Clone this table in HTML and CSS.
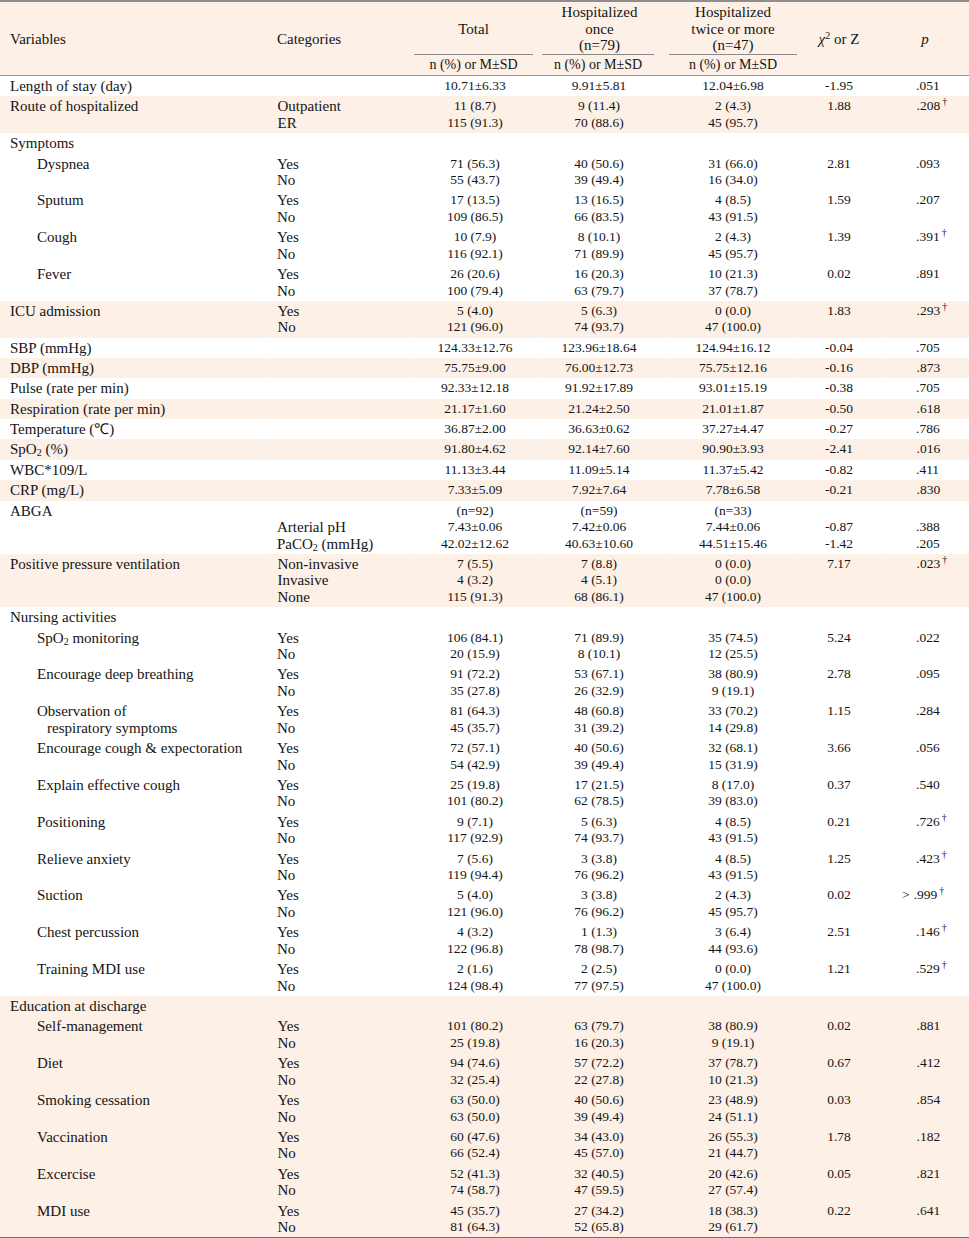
FILE: index.html
```html
<!DOCTYPE html>
<html>
<head>
<meta charset="utf-8">
<link rel="stylesheet" href="styles.css">
</head>
<body>
<table class="t">
<colgroup>
<col class="c-var"><col class="c-cat"><col class="c-tot"><col class="c-one"><col class="c-two"><col class="c-chi"><col class="c-p">
</colgroup>
<thead>
<tr class="h1">
<th rowspan="2" class="hv">Variables</th>
<th rowspan="2" class="hc">Categories</th>
<th class="hg hm">Total</th>
<th class="hg">Hospitalized<br>once<br>(n=79)</th>
<th class="hg">Hospitalized<br>twice or more<br>(n=47)</th>
<th rowspan="2" class="hx"><i>χ</i><sup>2</sup> or Z</th>
<th rowspan="2" class="hp"><i>p</i></th>
</tr>
<tr class="h2">
<th class="hs"><div class="sub s-tot">n (%) or M±SD</div></th>
<th class="hs"><div class="sub s-one">n (%) or M±SD</div></th>
<th class="hs"><div class="sub s-two">n (%) or M±SD</div></th>
</tr>
</thead>
<tbody>
<tr><td class="var">Length of stay (day)</td><td class="cat"></td><td class="n tot">10.71±6.33</td><td class="n one">9.91±5.81</td><td class="n two">12.04±6.98</td><td class="n chi">-1.95</td><td class="n p">.051</td></tr>
</tbody>
<tbody class="alt">
<tr><td class="var">Route of hospitalized</td><td class="cat">Outpatient<br>ER</td><td class="n tot">11 (8.7)<br>115 (91.3)</td><td class="n one">9 (11.4)<br>70 (88.6)</td><td class="n two">2 (4.3)<br>45 (95.7)</td><td class="n chi">1.88</td><td class="n p">.208<span class="dag">†</span></td></tr>
</tbody>
<tbody>
<tr><td class="var">Symptoms</td><td class="cat"></td><td class="n tot"></td><td class="n one"></td><td class="n two"></td><td class="n chi"></td><td class="n p"></td></tr>
<tr><td class="var in">Dyspnea</td><td class="cat">Yes<br>No</td><td class="n tot">71 (56.3)<br>55 (43.7)</td><td class="n one">40 (50.6)<br>39 (49.4)</td><td class="n two">31 (66.0)<br>16 (34.0)</td><td class="n chi">2.81</td><td class="n p">.093</td></tr>
<tr><td class="var in">Sputum</td><td class="cat">Yes<br>No</td><td class="n tot">17 (13.5)<br>109 (86.5)</td><td class="n one">13 (16.5)<br>66 (83.5)</td><td class="n two">4 (8.5)<br>43 (91.5)</td><td class="n chi">1.59</td><td class="n p">.207</td></tr>
<tr><td class="var in">Cough</td><td class="cat">Yes<br>No</td><td class="n tot">10 (7.9)<br>116 (92.1)</td><td class="n one">8 (10.1)<br>71 (89.9)</td><td class="n two">2 (4.3)<br>45 (95.7)</td><td class="n chi">1.39</td><td class="n p">.391<span class="dag">†</span></td></tr>
<tr><td class="var in">Fever</td><td class="cat">Yes<br>No</td><td class="n tot">26 (20.6)<br>100 (79.4)</td><td class="n one">16 (20.3)<br>63 (79.7)</td><td class="n two">10 (21.3)<br>37 (78.7)</td><td class="n chi">0.02</td><td class="n p">.891</td></tr>
</tbody>
<tbody class="alt">
<tr><td class="var">ICU admission</td><td class="cat">Yes<br>No</td><td class="n tot">5 (4.0)<br>121 (96.0)</td><td class="n one">5 (6.3)<br>74 (93.7)</td><td class="n two">0 (0.0)<br>47 (100.0)</td><td class="n chi">1.83</td><td class="n p">.293<span class="dag">†</span></td></tr>
</tbody>
<tbody>
<tr><td class="var">SBP (mmHg)</td><td class="cat"></td><td class="n tot">124.33±12.76</td><td class="n one">123.96±18.64</td><td class="n two">124.94±16.12</td><td class="n chi">-0.04</td><td class="n p">.705</td></tr>
</tbody>
<tbody class="alt">
<tr><td class="var">DBP (mmHg)</td><td class="cat"></td><td class="n tot">75.75±9.00</td><td class="n one">76.00±12.73</td><td class="n two">75.75±12.16</td><td class="n chi">-0.16</td><td class="n p">.873</td></tr>
</tbody>
<tbody>
<tr><td class="var">Pulse (rate per min)</td><td class="cat"></td><td class="n tot">92.33±12.18</td><td class="n one">91.92±17.89</td><td class="n two">93.01±15.19</td><td class="n chi">-0.38</td><td class="n p">.705</td></tr>
</tbody>
<tbody class="alt">
<tr><td class="var">Respiration (rate per min)</td><td class="cat"></td><td class="n tot">21.17±1.60</td><td class="n one">21.24±2.50</td><td class="n two">21.01±1.87</td><td class="n chi">-0.50</td><td class="n p">.618</td></tr>
</tbody>
<tbody>
<tr><td class="var">Temperature (℃)</td><td class="cat"></td><td class="n tot">36.87±2.00</td><td class="n one">36.63±0.62</td><td class="n two">37.27±4.47</td><td class="n chi">-0.27</td><td class="n p">.786</td></tr>
</tbody>
<tbody class="alt">
<tr><td class="var">SpO<sub>2</sub> (%)</td><td class="cat"></td><td class="n tot">91.80±4.62</td><td class="n one">92.14±7.60</td><td class="n two">90.90±3.93</td><td class="n chi">-2.41</td><td class="n p">.016</td></tr>
</tbody>
<tbody>
<tr><td class="var">WBC*109/L</td><td class="cat"></td><td class="n tot">11.13±3.44</td><td class="n one">11.09±5.14</td><td class="n two">11.37±5.42</td><td class="n chi">-0.82</td><td class="n p">.411</td></tr>
</tbody>
<tbody class="alt">
<tr><td class="var">CRP (mg/L)</td><td class="cat"></td><td class="n tot">7.33±5.09</td><td class="n one">7.92±7.64</td><td class="n two">7.78±6.58</td><td class="n chi">-0.21</td><td class="n p">.830</td></tr>
</tbody>
<tbody>
<tr><td class="var">ABGA</td><td class="cat"><br>Arterial pH<br>PaCO<sub>2</sub> (mmHg)</td><td class="n tot">(n=92)<br>7.43±0.06<br>42.02±12.62</td><td class="n one">(n=59)<br>7.42±0.06<br>40.63±10.60</td><td class="n two">(n=33)<br>7.44±0.06<br>44.51±15.46</td><td class="n chi"><br>-0.87<br>-1.42</td><td class="n p"><br>.388<br>.205</td></tr>
</tbody>
<tbody class="alt">
<tr><td class="var">Positive pressure ventilation</td><td class="cat">Non-invasive<br>Invasive<br>None</td><td class="n tot">7 (5.5)<br>4 (3.2)<br>115 (91.3)</td><td class="n one">7 (8.8)<br>4 (5.1)<br>68 (86.1)</td><td class="n two">0 (0.0)<br>0 (0.0)<br>47 (100.0)</td><td class="n chi">7.17</td><td class="n p">.023<span class="dag">†</span></td></tr>
</tbody>
<tbody>
<tr><td class="var">Nursing activities</td><td class="cat"></td><td class="n tot"></td><td class="n one"></td><td class="n two"></td><td class="n chi"></td><td class="n p"></td></tr>
<tr><td class="var in">SpO<sub>2</sub> monitoring</td><td class="cat">Yes<br>No</td><td class="n tot">106 (84.1)<br>20 (15.9)</td><td class="n one">71 (89.9)<br>8 (10.1)</td><td class="n two">35 (74.5)<br>12 (25.5)</td><td class="n chi">5.24</td><td class="n p">.022</td></tr>
<tr><td class="var in">Encourage deep breathing</td><td class="cat">Yes<br>No</td><td class="n tot">91 (72.2)<br>35 (27.8)</td><td class="n one">53 (67.1)<br>26 (32.9)</td><td class="n two">38 (80.9)<br>9 (19.1)</td><td class="n chi">2.78</td><td class="n p">.095</td></tr>
<tr><td class="var in">Observation of<br><span class="in2">respiratory symptoms</span></td><td class="cat">Yes<br>No</td><td class="n tot">81 (64.3)<br>45 (35.7)</td><td class="n one">48 (60.8)<br>31 (39.2)</td><td class="n two">33 (70.2)<br>14 (29.8)</td><td class="n chi">1.15</td><td class="n p">.284</td></tr>
<tr><td class="var in">Encourage cough &amp; expectoration</td><td class="cat">Yes<br>No</td><td class="n tot">72 (57.1)<br>54 (42.9)</td><td class="n one">40 (50.6)<br>39 (49.4)</td><td class="n two">32 (68.1)<br>15 (31.9)</td><td class="n chi">3.66</td><td class="n p">.056</td></tr>
<tr><td class="var in">Explain effective cough</td><td class="cat">Yes<br>No</td><td class="n tot">25 (19.8)<br>101 (80.2)</td><td class="n one">17 (21.5)<br>62 (78.5)</td><td class="n two">8 (17.0)<br>39 (83.0)</td><td class="n chi">0.37</td><td class="n p">.540</td></tr>
<tr><td class="var in">Positioning</td><td class="cat">Yes<br>No</td><td class="n tot">9 (7.1)<br>117 (92.9)</td><td class="n one">5 (6.3)<br>74 (93.7)</td><td class="n two">4 (8.5)<br>43 (91.5)</td><td class="n chi">0.21</td><td class="n p">.726<span class="dag">†</span></td></tr>
<tr><td class="var in">Relieve anxiety</td><td class="cat">Yes<br>No</td><td class="n tot">7 (5.6)<br>119 (94.4)</td><td class="n one">3 (3.8)<br>76 (96.2)</td><td class="n two">4 (8.5)<br>43 (91.5)</td><td class="n chi">1.25</td><td class="n p">.423<span class="dag">†</span></td></tr>
<tr><td class="var in">Suction</td><td class="cat">Yes<br>No</td><td class="n tot">5 (4.0)<br>121 (96.0)</td><td class="n one">3 (3.8)<br>76 (96.2)</td><td class="n two">2 (4.3)<br>45 (95.7)</td><td class="n chi">0.02</td><td class="n p"><span class="gt">&gt;</span>.999<span class="dag">†</span></td></tr>
<tr><td class="var in">Chest percussion</td><td class="cat">Yes<br>No</td><td class="n tot">4 (3.2)<br>122 (96.8)</td><td class="n one">1 (1.3)<br>78 (98.7)</td><td class="n two">3 (6.4)<br>44 (93.6)</td><td class="n chi">2.51</td><td class="n p">.146<span class="dag">†</span></td></tr>
<tr><td class="var in">Training MDI use</td><td class="cat">Yes<br>No</td><td class="n tot">2 (1.6)<br>124 (98.4)</td><td class="n one">2 (2.5)<br>77 (97.5)</td><td class="n two">0 (0.0)<br>47 (100.0)</td><td class="n chi">1.21</td><td class="n p">.529<span class="dag">†</span></td></tr>
</tbody>
<tbody class="alt last">
<tr><td class="var">Education at discharge</td><td class="cat"></td><td class="n tot"></td><td class="n one"></td><td class="n two"></td><td class="n chi"></td><td class="n p"></td></tr>
<tr><td class="var in">Self-management</td><td class="cat">Yes<br>No</td><td class="n tot">101 (80.2)<br>25 (19.8)</td><td class="n one">63 (79.7)<br>16 (20.3)</td><td class="n two">38 (80.9)<br>9 (19.1)</td><td class="n chi">0.02</td><td class="n p">.881</td></tr>
<tr><td class="var in">Diet</td><td class="cat">Yes<br>No</td><td class="n tot">94 (74.6)<br>32 (25.4)</td><td class="n one">57 (72.2)<br>22 (27.8)</td><td class="n two">37 (78.7)<br>10 (21.3)</td><td class="n chi">0.67</td><td class="n p">.412</td></tr>
<tr><td class="var in">Smoking cessation</td><td class="cat">Yes<br>No</td><td class="n tot">63 (50.0)<br>63 (50.0)</td><td class="n one">40 (50.6)<br>39 (49.4)</td><td class="n two">23 (48.9)<br>24 (51.1)</td><td class="n chi">0.03</td><td class="n p">.854</td></tr>
<tr><td class="var in">Vaccination</td><td class="cat">Yes<br>No</td><td class="n tot">60 (47.6)<br>66 (52.4)</td><td class="n one">34 (43.0)<br>45 (57.0)</td><td class="n two">26 (55.3)<br>21 (44.7)</td><td class="n chi">1.78</td><td class="n p">.182</td></tr>
<tr><td class="var in">Excercise</td><td class="cat">Yes<br>No</td><td class="n tot">52 (41.3)<br>74 (58.7)</td><td class="n one">32 (40.5)<br>47 (59.5)</td><td class="n two">20 (42.6)<br>27 (57.4)</td><td class="n chi">0.05</td><td class="n p">.821</td></tr>
<tr><td class="var in">MDI use</td><td class="cat">Yes<br>No</td><td class="n tot">45 (35.7)<br>81 (64.3)</td><td class="n one">27 (34.2)<br>52 (65.8)</td><td class="n two">18 (38.3)<br>29 (61.7)</td><td class="n chi">0.22</td><td class="n p">.641</td></tr>
</tbody>
</table>
</body>
</html>
```

FILE: styles.css
```css
html, body {
  margin: 0;
  padding: 0;
  background: #ffffff;
}
body {
  font-family: "Liberation Serif", "Times New Roman", serif;
  color: #141414;
}
.t {
  width: 969px;
  border-collapse: collapse;
  table-layout: fixed;
  border-top: 2px solid #8e8e8e;
  border-bottom: 2px solid #6f6f6f;
}
.c-var { width: 268px; }
.c-cat { width: 145px; }
.c-tot { width: 129px; }
.c-one { width: 127px; }
.c-two { width: 128px; }
.c-chi { width: 88px; }
.c-p { width: 84px; }

thead th {
  background: #fdf0e6;
  font-weight: normal;
  font-size: 15px;
  line-height: 16.5px;
  padding: 2px 0 0;
  vertical-align: middle;
}
.hv { text-align: left; padding-left: 10px; border-bottom: 1px solid #9a9a9a; }
.hc { text-align: left; padding-left: 9px; border-bottom: 1px solid #9a9a9a; }
.hx { text-align: center; padding-right: 4px; border-bottom: 1px solid #9a9a9a; }
.hp { text-align: center; padding-right: 4px; border-bottom: 1px solid #9a9a9a; }
.hx sup { font-size: 10px; line-height: 0; vertical-align: 5px; }
.hg { text-align: center; vertical-align: top; }
.hm { vertical-align: middle; }
.h1 .hg:nth-child(3) { padding-right: 8px; }
.h1 .hg:nth-child(4) { padding-right: 12px; }
.h2 .hs {
  padding: 0;
  border-bottom: 1px solid #9a9a9a;
}
.sub {
  border-top: 1px solid #8a8a8a;
  font-size: 14px;
  line-height: 16.5px;
  padding: 2px 0 2px;
  text-align: center;
}
.s-tot { margin: 0 9px 0 1px; }
.s-one { margin: 0 15px 0 0; }
.s-two { margin: 0; }

tbody td {
  padding: 2px 0 1.85px;
  line-height: 16.5px;
  vertical-align: top;
  font-size: 13.5px;
  white-space: nowrap;
}
tbody.alt td { background: #fdf0e6; }
tbody.alt td + td { border-left: 1px solid #fcf4ee; }
td.var { padding-left: 10px; font-size: 15px; }
td.var.in { padding-left: 37px; }
.in2 { padding-left: 10px; }
td.cat { padding-left: 9px; font-size: 15px; }
td.n { text-align: center; }
td.tot { padding-right: 5px; }
td.one { padding-right: 13px; }
td.two { padding-right: 0; }
td.chi { padding-right: 4px; }
td.p { text-align: left; padding-left: 31px; }
.gt { margin-left: -14px; padding-right: 4px; }
.dag {
  display: inline-block;
  width: 0;
  font-size: 10px;
  vertical-align: 5px;
  line-height: 0;
  padding-left: 2px;
}
sub {
  font-size: 10px;
  line-height: 0;
  vertical-align: -2px;
}
```
